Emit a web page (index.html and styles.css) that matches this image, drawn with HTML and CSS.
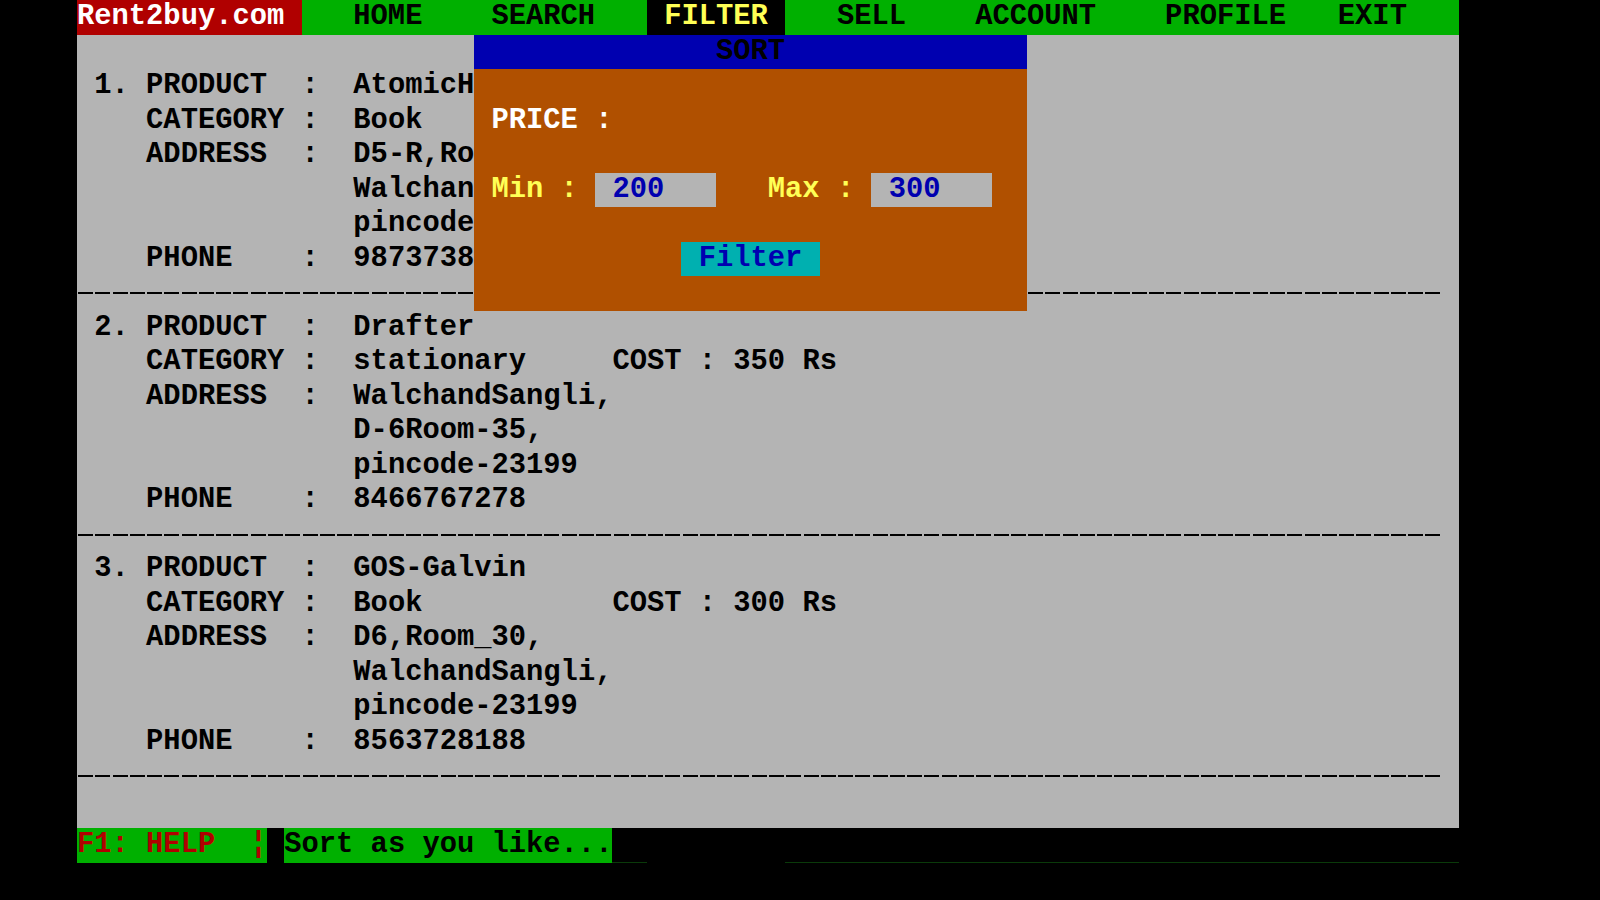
FILE: index.html
```html
<!DOCTYPE html>
<html>
<head>
<meta charset="utf-8">
<title>Rent2buy.com - Filter</title>
<link rel="stylesheet" href="styles.css">
</head>
<body>
<div class="screen">
  <div class="menubar">
    <div class="brand">Rent2buy.com</div>
    <nav class="nav">
      <span class="nav-item m3">HOME</span>
      <span class="nav-item m4">SEARCH</span>
      <span class="nav-item m3 active"> FILTER </span>
      <span class="nav-item m3">SELL</span>
      <span class="nav-item m4">ACCOUNT</span>
      <span class="nav-item m4">PROFILE</span>
      <span class="nav-item m3">EXIT</span>
    </nav>
  </div>

  <div class="content">
    <div class="item"> 1. PRODUCT  :  AtomicH
    CATEGORY :  Book
    ADDRESS  :  D5-R,Ro
                Walchan
                pincode
    PHONE    :  9873738</div>
    <div class="rule"></div>
    <div class="item"> 2. PRODUCT  :  Drafter
    CATEGORY :  stationary     COST : 350 Rs
    ADDRESS  :  WalchandSangli,
                D-6Room-35,
                pincode-23199
    PHONE    :  8466767278</div>
    <div class="rule"></div>
    <div class="item"> 3. PRODUCT  :  GOS-Galvin
    CATEGORY :  Book           COST : 300 Rs
    ADDRESS  :  D6,Room_30,
                WalchandSangli,
                pincode-23199
    PHONE    :  8563728188</div>
    <div class="rule"></div>

    <div class="popup">
      <div class="popup-title">SORT</div>
      <div class="popup-body">
        <div class="price">PRICE :</div>
        <div class="fields">
          <span class="label">Min :</span>
          <span class="field">200</span>
          <span class="label label-max">Max :</span>
          <span class="field">300</span>
        </div>
        <div class="actions"><span class="button">Filter</span></div>
      </div>
    </div>
  </div>

  <div class="status">
    <span class="help">F1: HELP  ¦</span>
    <span class="msg">Sort as you like...</span>
    <span class="status-rest"></span>
  </div>
</div>
</body>
</html>
```
FILE: styles.css
```css
:root {
  --row: 34.52px;
  --gray: #b4b4b4;
  --green: #00b000;
  --red: #b00000;
  --blue: #0000b0;
  --brown: #b05000;
  --cyan: #00b0b0;
  --yellow: #ffff55;
}

html, body {
  margin: 0;
  padding: 0;
  background: #000;
}

body {
  font-family: "Liberation Mono", "DejaVu Sans Mono", monospace;
  font-size: 28.79px;
  font-weight: bold;
  line-height: var(--row);
  height: 900px;
  overflow: hidden;
}

.screen {
  margin-left: 77px;
  width: 80ch;
}

/* ---------- menu bar ---------- */
.menubar {
  display: flex;
  height: var(--row);
  background: var(--green);
  color: #000;
  white-space: pre;
}

.brand {
  width: 13ch;
  background: var(--red);
  color: #fff;
}

.nav {
  display: flex;
}

.nav-item.m3 { margin-left: 3ch; }
.nav-item.m4 { margin-left: 4ch; }

.nav-item.active {
  background: #000;
  color: var(--yellow);
}

/* ---------- content ---------- */
.content {
  position: relative;
  box-sizing: border-box;
  height: calc(var(--row) * 23);
  padding-top: var(--row);
  background: var(--gray);
  color: #000;
}

.item {
  white-space: pre;
}

.rule {
  height: var(--row);
  background-image: repeating-linear-gradient(90deg, #000 0 15px, transparent 15px 17.275px);
  background-size: 1364.7px 2px;
  background-position: 1px 16px;
  background-repeat: no-repeat;
}

/* ---------- sort popup ---------- */
.popup {
  position: absolute;
  left: 23ch;
  top: 0;
  width: 32ch;
}

.popup-title {
  height: var(--row);
  background: var(--blue);
  color: #000;
  text-align: center;
}

.popup-body {
  display: grid;
  grid-template-rows: repeat(7, var(--row));
  padding-left: 1ch;
  background: var(--brown);
  white-space: pre;
}

.price {
  grid-row: 2;
  color: #fff;
}

.fields {
  grid-row: 4;
  display: flex;
}

.label {
  color: var(--yellow);
  width: 6ch;
}

.label-max {
  margin-left: 3ch;
}

.field {
  box-sizing: border-box;
  width: 7ch;
  padding-left: 1ch;
  background: var(--gray);
  color: var(--blue);
}

.actions {
  grid-row: 6;
  padding-left: 11ch;
}

.button {
  display: inline-block;
  width: 8ch;
  text-align: center;
  background: var(--cyan);
  color: var(--blue);
}

/* ---------- status bar ---------- */
.status {
  display: flex;
  height: var(--row);
  white-space: pre;
}

.help {
  width: 11ch;
  background: var(--green);
  color: var(--red);
}

.msg {
  width: 19ch;
  margin-left: 1ch;
  background: var(--green);
  color: #000;
}

.status-rest {
  flex: 1;
  background-image: linear-gradient(90deg, #0a3a0a 0 2ch, transparent 2ch 10ch, #0a3a0a 10ch);
  background-size: 100% 1px;
  background-position: 0 100%;
  background-repeat: no-repeat;
}
```
